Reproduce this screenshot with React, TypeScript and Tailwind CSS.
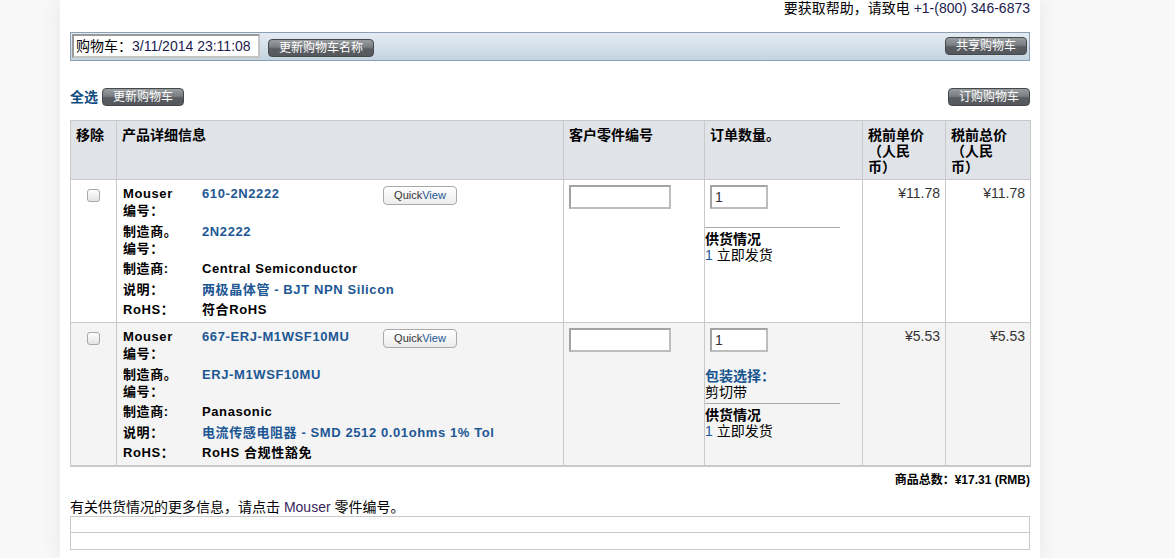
import React from "react";

const FONT = "font-['Liberation_Sans','Noto_Sans_CJK_SC',sans-serif]";

function DarkButton({ children, className = "" }: { children: React.ReactNode; className?: string }) {
  return (
    <button
      className={`h-[18px] rounded-[4px] border border-[#46494c] bg-[linear-gradient(to_bottom,#9a9da0_0%,#7a7d81_45%,#5a5e62_55%,#55595d_100%)] px-[8px] text-[12px] leading-[16px] text-white ${className}`}
    >
      {children}
    </button>
  );
}

function QuickView() {
  return (
    <button className="h-[19px] w-[74px] rounded-[4px] border border-[#a9a9a9] bg-[linear-gradient(to_bottom,#ffffff,#ececec)] text-[11px] font-normal leading-[15px] tracking-normal text-[#333]">
      Quick<span className="text-[#1d5794]">View</span>
    </button>
  );
}

function CheckBox() {
  return (
    <span className="inline-block h-[13px] w-[13px] rounded-[3px] border border-[#a8a8a8] bg-[linear-gradient(to_bottom,#ffffff,#e3e3e3)]" />
  );
}

type Item = {
  mouser: string;
  mfrNo: string;
  mfr: string;
  descCn: string;
  descEn: string;
  rohs: string;
  price: string;
  pkg?: boolean;
  bg: string;
};

const items: Item[] = [
  {
    mouser: "610-2N2222",
    mfrNo: "2N2222",
    mfr: "Central Semiconductor",
    descCn: "两极晶体管",
    descEn: " - BJT NPN Silicon",
    rohs: "符合RoHS",
    price: "¥11.78",
    bg: "bg-white",
  },
  {
    mouser: "667-ERJ-M1WSF10MU",
    mfrNo: "ERJ-M1WSF10MU",
    mfr: "Panasonic",
    descCn: "电流传感电阻器",
    descEn: " - SMD 2512 0.01ohms 1% Tol",
    rohs: "RoHS 合规性豁免",
    price: "¥5.53",
    pkg: true,
    bg: "bg-[#f4f4f4]",
  },
];

const th = "border border-[#c9c9c9] px-[5px] pt-[6px] align-top text-left text-[14px] font-bold leading-[16px] text-black";
const td = "border border-[#c9c9c9] align-top";

export default function App() {
  return (
    <div className={`min-h-[558px] bg-[#f8f8f8] ${FONT}`}>
      <div className="ml-[60px] min-h-[558px] w-[980px] bg-white px-[10px] shadow-[0_0_18px_rgba(60,80,100,0.10)]">
        {/* help line */}
        <div className="text-right text-[14px] leading-[16px] text-black">
          要获取帮助，请致电 <span className="text-[#1b1b50]">+1-(800) 346-6873</span>
        </div>

        {/* toolbar */}
        <div className="mt-[16px] flex h-[29px] items-start justify-between border border-[#8c9fb4] bg-[linear-gradient(to_bottom,#e5ebf2,#c3d4e1)] pl-[1px] pr-[2px]">
          <div className="flex items-start">
            <div className="mt-[1px] flex h-[24px] w-[188px] items-center border-2 border-[#9a9a9a] border-b-[#c4c4c4] border-r-[#c4c4c4] bg-white pl-[2px] text-[14px] leading-[16px] text-black whitespace-nowrap">
              购物车：<span className="text-[#1b1b50]">3/11/2014 23:11:08</span>
            </div>
            <DarkButton className="ml-[8px] mt-[6px] w-[106px]">更新购物车名称</DarkButton>
          </div>
          <DarkButton className="mt-[4px] w-[82px]">共享购物车</DarkButton>
        </div>

        {/* select row */}
        <div className="mt-[27px] flex h-[18px] items-center justify-between">
          <div className="flex items-center">
            <span className="text-[14px] font-bold leading-[16px] text-[#0f4c81]">全选</span>
            <DarkButton className="ml-[4px] w-[82px]">更新购物车</DarkButton>
          </div>
          <DarkButton className="w-[82px]">订购购物车</DarkButton>
        </div>

        {/* table */}
        <table className="mt-[14px] w-[960px] table-fixed border-collapse">
          <colgroup>
            <col className="w-[46px]" />
            <col className="w-[447px]" />
            <col className="w-[141px]" />
            <col className="w-[158px]" />
            <col className="w-[83px]" />
            <col className="w-[85px]" />
          </colgroup>
          <thead>
            <tr className="h-[59px] bg-[#e0e3e8]">
              <th className={th}>移除</th>
              <th className={th}>产品详细信息</th>
              <th className={th}>客户零件编号</th>
              <th className={th}>订单数量。</th>
              <th className={th}>
                税前单价
                <br />
                （人民
                <br />
                币）
              </th>
              <th className={th}>
                税前总价
                <br />
                （人民
                <br />
                币）
              </th>
            </tr>
          </thead>
          <tbody>
            {items.map((it, i) => (
              <tr
                key={i}
                className={`h-[143px] ${it.bg} ${i === items.length - 1 ? "border-b-2 border-b-[#c9c9c9]" : ""}`}
              >
                <td className={`${td} pt-[5px] text-center`}>
                  <CheckBox />
                </td>
                <td className={`${td} pl-[6px] pt-[5px]`}>
                  <div className="grid grid-cols-[79px_181px_auto] gap-y-[3.5px] text-[13px] font-bold leading-[17px] tracking-[0.6px] text-black">
                    <div>
                      Mouser
                      <br />
                      编号：
                    </div>
                    <div className="text-[#1d5794]">{it.mouser}</div>
                    <div className="pt-[1px]">
                      <QuickView />
                    </div>

                    <div>
                      制造商。
                      <br />
                      编号：
                    </div>
                    <div className="col-span-2 text-[#1d5794]">{it.mfrNo}</div>

                    <div>制造商:</div>
                    <div className="col-span-2">{it.mfr}</div>

                    <div>说明：</div>
                    <div className="col-span-2 text-[#1d5794]">
                      {it.descCn}
                      {it.descEn}
                    </div>

                    <div>RoHS：</div>
                    <div className="col-span-2">{it.rohs}</div>
                  </div>
                </td>
                <td className={`${td} pl-[5px] pt-[5px]`}>
                  <div className="h-[24px] w-[102px] border-2 border-[#a3a3a3] border-b-[#bdbdbd] border-r-[#bdbdbd] bg-white" />
                </td>
                <td className={`${td} pt-[5px]`}>
                  <div className="ml-[5px] flex h-[24px] w-[58px] items-center border-2 border-[#a3a3a3] border-b-[#bdbdbd] border-r-[#bdbdbd] bg-white pl-[3px] text-[14px] leading-[16px] text-[#333]">
                    1
                  </div>
                  <div className="text-[14px] leading-[16px] text-black">
                    {it.pkg ? (
                      <>
                        <div className="mt-[16px] font-bold text-[#17558f]">包装选择：</div>
                        <div>剪切带</div>
                        <div className="mt-[3px] h-px w-[135px] bg-[#aaaaaa]" />
                      </>
                    ) : (
                      <div className="mt-[18px] h-px w-[135px] bg-[#aaaaaa]" />
                    )}
                    <div className="mt-[3px] font-bold">供货情况</div>
                    <div>
                      <span className="text-[#1d5794]">1</span> 立即发货
                    </div>
                  </div>
                </td>
                <td className={`${td} pr-[5px] pt-[5px] text-right text-[14px] leading-[16px] text-[#333]`}>
                  {it.price}
                </td>
                <td className={`${td} pr-[5px] pt-[5px] text-right text-[14px] leading-[16px] text-[#333]`}>
                  {it.price}
                </td>
              </tr>
            ))}
          </tbody>
        </table>

        {/* summary */}
        <div className="mt-[6px] text-right text-[12px] font-bold leading-[14px] text-black">
          商品总数：¥17.31 (RMB)
        </div>

        <div className="mt-[12px] text-[14px] leading-[16px] text-black">
          有关供货情况的更多信息，请点击 <span className="text-[#3a1f5c]">Mouser</span> 零件编号。
        </div>

        <div className="mt-[1px] border border-[#c9c9c9]">
          <div className="h-[16px] border-b border-[#c9c9c9]" />
          <div className="h-[16px]" />
        </div>
      </div>
    </div>
  );
}
